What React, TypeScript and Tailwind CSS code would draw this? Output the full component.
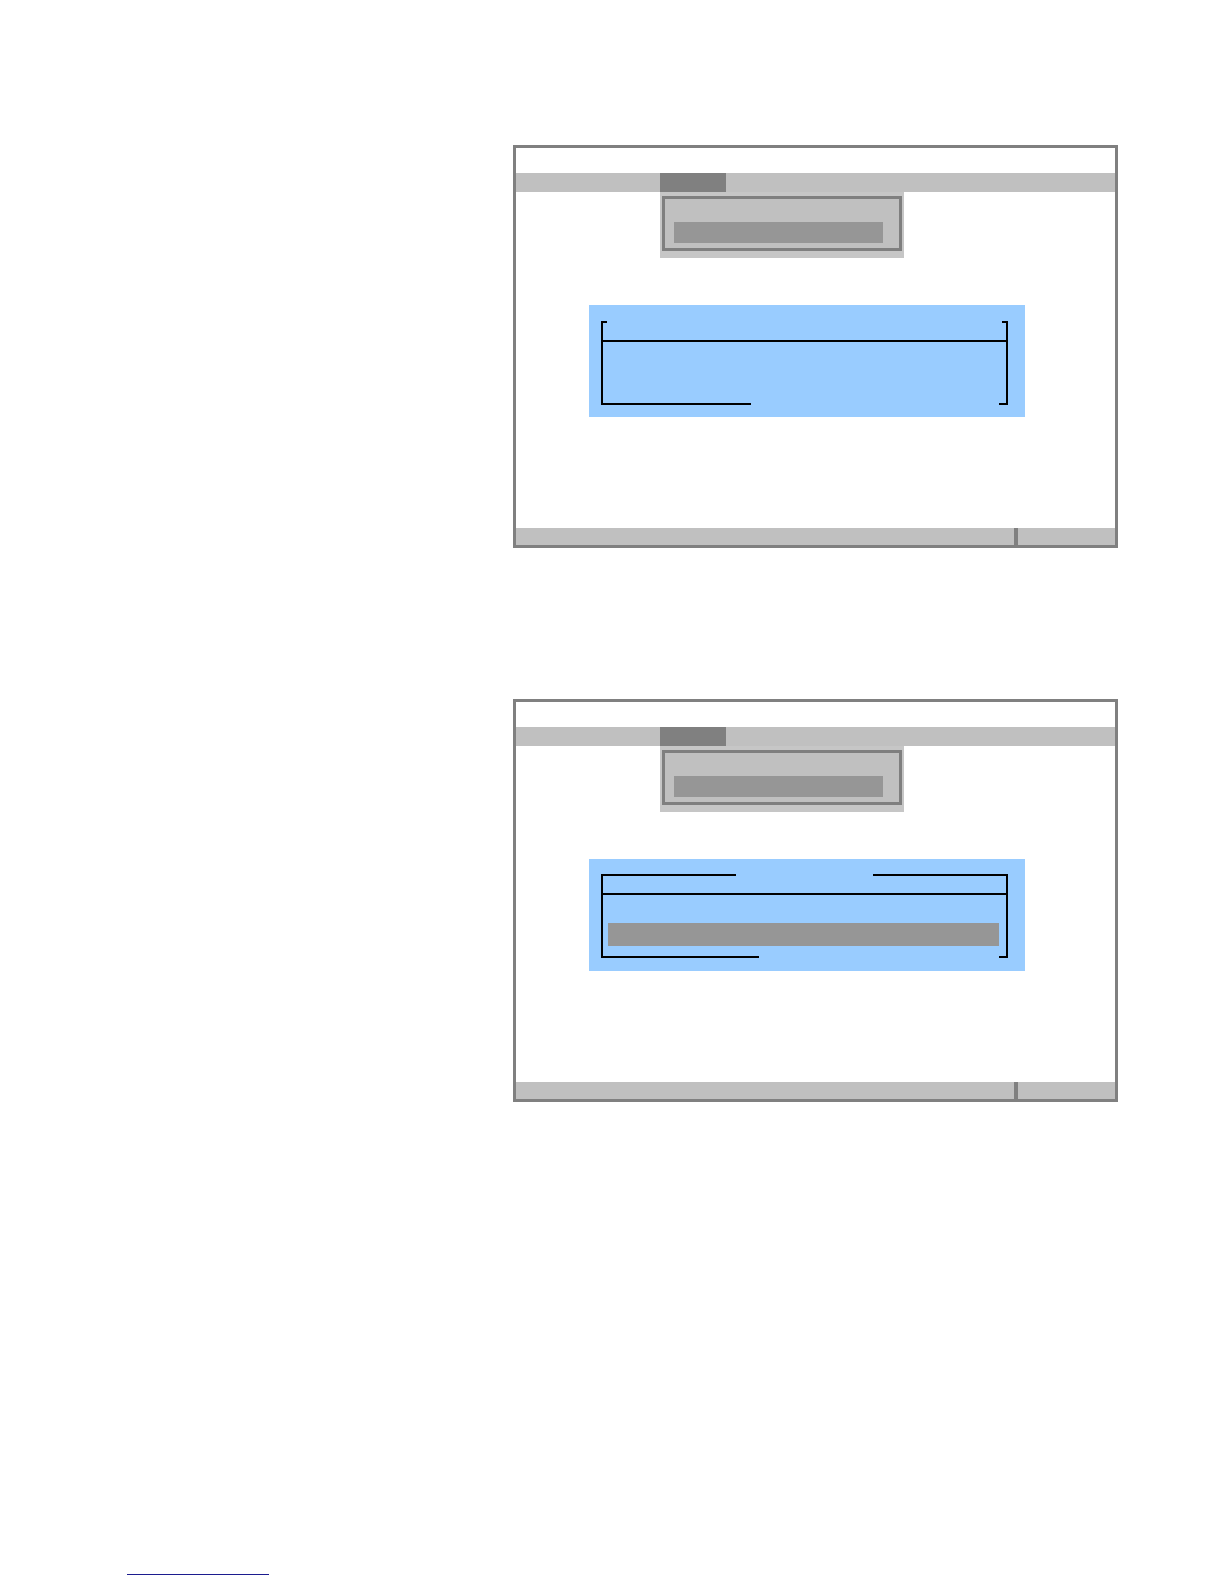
import React from "react";

type Variant = 1 | 2;

function GroupBox({ variant }: { variant: Variant }) {
  const topSeg = variant === 1 ? "w-[6px]" : "w-[135px]";
  const bottomSeg = variant === 1 ? "w-[150px]" : "w-[158px]";
  return (
    <div
      className={
        "ml-[73px] w-[436px] h-[112px] bg-[#99ccff] pl-[12px] " +
        (variant === 1 ? "pt-[16px]" : "pt-[15px]")
      }
    >
      <div className="w-[407px] flex flex-col">
        <div className="h-[2px] flex justify-between">
          <div className={topSeg + " h-[2px] bg-black"} />
          <div className={topSeg + " h-[2px] bg-black"} />
        </div>
        <div className="h-[17px] border-x-2 border-black" />
        <div className="h-[2px] bg-black" />
        <div className="h-[61px] border-x-2 border-black pt-[28px] pl-[5px]">
          {variant === 2 && <div className="w-[391px] h-[23px] bg-[#969696]" />}
        </div>
        <div className="h-[2px] flex justify-between">
          <div className={bottomSeg + " h-[2px] bg-black"} />
          <div className="w-[9px] h-[2px] bg-black" />
        </div>
      </div>
    </div>
  );
}

function Screen({ variant }: { variant: Variant }) {
  return (
    <div className="ml-[513px] w-[605px] h-[403px] border-[3px] border-[#808080] bg-white flex flex-col">
      <div className="h-[25px]" />
      <div className="h-[19px] flex bg-[#c0c0c0]">
        <div className="w-[144px]" />
        <div className="w-[66px] bg-[#808080]" />
        <div className="flex-1" />
      </div>
      <div className="ml-[144px] w-[244px] h-[66px] bg-[#c6c6c6] px-[2px] pt-[4px]">
        <div className="h-[55px] border-[3px] border-[#7f7f7f] bg-[#c0c0c0] pl-[9px] pt-[23px]">
          <div className="w-[209px] h-[21px] bg-[#969696]" />
        </div>
      </div>
      <div className="h-[47px]" />
      <GroupBox variant={variant} />
      <div className="flex-1" />
      <div className="h-[17px] flex bg-[#c0c0c0]">
        <div className="w-[498px]" />
        <div className="w-[4px] bg-[#808080]" />
        <div className="flex-1" />
      </div>
    </div>
  );
}

export default function App() {
  return (
    <div
      className="w-[1224px] h-[1584px] bg-white pt-[145px] flex flex-col"
      style={{ fontFamily: '"Liberation Sans", Arial, sans-serif' }}
    >
      <Screen variant={1} />
      <div className="h-[151px]" />
      <Screen variant={2} />
      <div className="h-[472px]" />
      <div className="ml-[127px] w-[142px] h-[1px] bg-[#1c1c8f]" />
    </div>
  );
}
